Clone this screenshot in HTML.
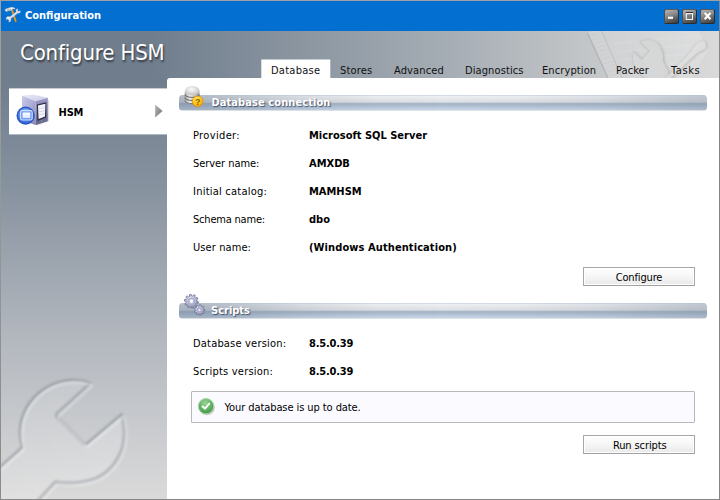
<!DOCTYPE html>
<html>
<head>
<meta charset="utf-8">
<title>Configuration</title>
<style>
html,body{margin:0;padding:0;}
body{width:720px;height:500px;overflow:hidden;background:#868686;position:relative;
  font-family:"DejaVu Sans Condensed","Liberation Sans",sans-serif;font-size:11px;color:#000;}
.abs{position:absolute;}
svg{position:absolute;overflow:visible;}
#titlebar{left:1px;top:1px;width:718px;height:30px;background:#0370d1;}
#title{left:25px;top:9px;color:#fff;font-weight:bold;font-size:11px;line-height:14px;white-space:nowrap;}
.wb{top:9px;width:15px;height:15px;border-radius:2.5px;box-sizing:border-box;border:1px solid #2c2c2c;border-top-color:#5a5a5a;border-left-color:#4e4e4e;
  background:linear-gradient(160deg,#b6b6b6 0%,#8a8a8a 40%,#5c5c5c 70%,#3a3a3a 100%);}
#main{left:1px;top:31px;width:718px;height:468px;background:linear-gradient(to bottom,#6f7d8d 0px,#6f7d8d 50px,#8893a0 160px,#b2b7be 305px,#dadada 468px);overflow:hidden;}
#hdr{left:0;top:0;width:718px;height:47px;background:linear-gradient(to right,#6f7d8d 0px,#6f7d8d 150px,#929ca6 340px,#a8afb6 460px,#c2c5c7 580px,#dadada 718px);}
#heading{left:20px;top:38px;font-size:22px;line-height:30px;letter-spacing:-0.17px;color:#fff;white-space:nowrap;text-shadow:1px 2px 2px rgba(0,0,0,0.55);}
#content{left:167px;top:78px;width:552px;height:421px;background:#fff;border-top-left-radius:3px;}
#tab{left:261px;top:59px;width:69.4px;height:20px;background:#fff;transform:translate(0.3px,0.5px);}
.tabtxt{top:64px;line-height:14px;white-space:nowrap;color:#111;}
#side{left:9px;top:89px;width:159px;height:46px;background:#fff;transform:translateY(-0.6px);}
.bar{left:179px;width:528px;height:16px;border-radius:4px;overflow:hidden;transform-origin:0 0;transform:scaleY(0.969);
  background:linear-gradient(to bottom,#c5ced8 0%,#eef0f3 8%,#dcdfe3 46%,#a3b3c4 56%,#c5d5e6 94%,#bfc8d2 100%);}
.bar i{position:absolute;left:0;top:0;width:100%;height:100%;
  background:linear-gradient(to bottom,#b4bdc8 0%,#b0b9c4 8%,#a7b1bd 46%,#8b9cb0 56%,#a2b1c2 94%,#a6b2c0 100%);
  -webkit-mask-image:linear-gradient(to right,#000 0%,rgba(0,0,0,0.9) 7%,rgba(0,0,0,0.35) 23%,rgba(0,0,0,0.06) 38%,rgba(0,0,0,0) 50%,rgba(0,0,0,0.06) 64%,rgba(0,0,0,0.28) 80%,rgba(0,0,0,0.62) 94%,rgba(0,0,0,0.75) 100%);
  mask-image:linear-gradient(to right,#000 0%,rgba(0,0,0,0.9) 7%,rgba(0,0,0,0.35) 23%,rgba(0,0,0,0.06) 38%,rgba(0,0,0,0) 50%,rgba(0,0,0,0.06) 64%,rgba(0,0,0,0.28) 80%,rgba(0,0,0,0.62) 94%,rgba(0,0,0,0.75) 100%);}
.bartxt{color:#fff;font-weight:bold;line-height:14px;white-space:nowrap;text-shadow:1px 1px 1px rgba(60,75,100,0.9);}
.lbl{left:193px;line-height:14px;white-space:nowrap;}
.val{left:309px;line-height:14px;font-weight:bold;white-space:nowrap;}
.btn{left:583px;width:110px;height:17px;border:1px solid #a8a8a8;border-bottom-color:#a0a0a0;box-shadow:inset 0 0 0 1px #fff;background:linear-gradient(to bottom,#ffffff 0%,#f6f6f6 50%,#e9e9e9 100%);text-align:center;line-height:20px;overflow:hidden;white-space:nowrap;}
#status{left:191px;top:391px;width:502px;height:30px;border:1px solid #b8b8b8;border-radius:1px;background:#fafaff;}
</style>
</head>
<body>
<div class="abs" style="left:0;top:0;width:720px;height:1px;background:#a0a0a0"></div>
<div class="abs" style="left:0;top:0;width:1px;height:500px;background:linear-gradient(to bottom,#a0a0a0,#8a8a8a)"></div>
<div class="abs" id="titlebar"></div>
<div class="abs" id="title">Configuration</div>
<div class="abs wb" style="left:664px"></div>
<div class="abs wb" style="left:682px"></div>
<div class="abs wb" style="left:700px"></div>
<svg style="left:664px;top:9px" width="51" height="15" viewBox="0 0 51 15">
  <rect x="4" y="7.7" width="5" height="2.1" fill="#fff"/>
  <rect x="21.8" y="3" width="7.2" height="1.3" fill="#303030"/>
  <rect x="22.3" y="4.6" width="6.2" height="5.8" fill="none" stroke="#fff" stroke-width="1"/>
  <path d="M40.7 3.9 L46.5 10.3 M46.5 3.9 L40.7 10.3" stroke="#fff" stroke-width="2.1" fill="none"/>
</svg>

<div class="abs" id="main"><div class="abs" id="hdr"></div><svg style="left:-1px;top:-31px" width="720" height="500" viewBox="0 0 720 500">
  <defs>
    <linearGradient id="gWr" x1="0" y1="0" x2="1" y2="1">
      <stop offset="0" stop-color="#fff" stop-opacity="0.08"/><stop offset="1" stop-color="#fff" stop-opacity="0.24"/>
    </linearGradient>
    <clipPath id="cLeft"><rect x="1" y="135" width="166" height="364"/></clipPath>
    <clipPath id="cTop"><rect x="1" y="31" width="718" height="47"/></clipPath>
    <filter id="fB1" x="-20%" y="-20%" width="140%" height="140%"><feGaussianBlur stdDeviation="1.1"/></filter>
    <filter id="fB2" x="-20%" y="-20%" width="140%" height="140%"><feGaussianBlur stdDeviation="0.7"/></filter>
  </defs>
  <g clip-path="url(#cLeft)">
    <path d="M90 383 L57 413 Q55 415 57 417 L83 443 Q85 445 87 443 L121.5 414 Q126 430 122.5 446 Q116 468 96 478 Q76 485 55 481.5 L36 502 L-4 502 L-4 470 L22 447 Q16 425 27 406 Q40 386 62 381 Q78 378 90 383 Z" transform="translate(1,1.2)" fill="url(#gWr)"/>
    <path d="M90 383 L57 413 Q55 415 57 417 L83 443 Q85 445 87 443 L121.5 414 Q126 430 122.5 446 Q116 468 96 478 Q76 485 55 481.5 L36 502 L-4 502 L-4 470 L22 447 Q16 425 27 406 Q40 386 62 381 Q78 378 90 383 Z" transform="translate(0.2,0.4)" fill="none" stroke="#5f6771" stroke-opacity="0.34" stroke-width="3" stroke-linejoin="round" filter="url(#fB1)"/>
    <path d="M90 383 L57 413 Q55 415 57 417 L83 443 Q85 445 87 443 L121.5 414 Q126 430 122.5 446 Q116 468 96 478 Q76 485 55 481.5 L36 502 L-4 502 L-4 470 L22 447 Q16 425 27 406 Q40 386 62 381 Q78 378 90 383 Z" transform="translate(2.2,2.4)" fill="none" stroke="#fff" stroke-opacity="0.34" stroke-width="2.8" stroke-linejoin="round" filter="url(#fB1)"/>
  </g>
  <g clip-path="url(#cTop)">
    <path d="M601 30 L698 30 L708 50 L690 80 L623 80 Z" fill="#fff" opacity="0.17"/>
    <path d="M612 44 L700 36 M616 52 L704 44 M620 60 L700 53 M623 68 L694 62" fill="none" stroke="#fff" stroke-opacity="0.12" stroke-width="1.2"/>
    <path d="M587.5 33 L596 29 L601 30 L623 80 L609 80 Z" fill="#fff" opacity="0.2"/>
    <path d="M590 36 L599 33 M592 40 L601 37 M594 44 L603 41 M596 48 L605 45 M598 52 L607 49 M600 56 L609 53 M602 60 L611 57 M604 64 L613 61 M606 68 L615 65 M608 72 L617 69 M610 76 L619 73" fill="none" stroke="#999" stroke-opacity="0.13" stroke-width="0.8"/>
    <path d="M587.5 33 L609 80" fill="none" stroke="#777" stroke-opacity="0.28" stroke-width="1.4" filter="url(#fB2)"/>
    <path d="M601 30 L623 80" fill="none" stroke="#888" stroke-opacity="0.22" stroke-width="1.2" filter="url(#fB2)"/>
    <path d="M641 42 Q649 38 657 43 Q664 50 663 61 L672 80 L648 80 Q638 74 633.5 62 Q632 57 634 52 L642 60 L650 51 Z" transform="translate(1.5,1)" fill="#666" fill-opacity="0.16" filter="url(#fB1)"/>
    <path d="M641 42 Q649 38 657 43 Q664 50 663 61 L672 80 L648 80 Q638 74 633.5 62 Q632 57 634 52 L642 60 L650 51 Z" fill="none" stroke="#777" stroke-opacity="0.2" stroke-width="2" filter="url(#fB1)"/>
    <path d="M641 42 Q649 38 657 43 Q664 50 663 61 L672 80 L648 80 Q638 74 633.5 62 Q632 57 634 52 L642 60 L650 51 Z" fill="#e2e2e2" fill-opacity="0.6"/>
    <path d="M697 44 Q702 40 705 42 Q707 45 705 49 L697 53 L669 80 L664 80 L691 52 Q693 47 697 44 Z" transform="translate(1.2,1)" fill="#666" fill-opacity="0.14" filter="url(#fB1)"/>
    <path d="M697 44 Q702 40 705 42 Q707 45 705 49 L697 53 L669 80 L664 80 L691 52 Q693 47 697 44 Z" fill="none" stroke="#777" stroke-opacity="0.2" stroke-width="1.6" filter="url(#fB1)"/>
    <path d="M697 44 Q702 40 705 42 Q707 45 705 49 L697 53 L669 80 L664 80 L691 52 Q693 47 697 44 Z" fill="#e6e6e6" fill-opacity="0.65"/>
  </g>
</svg></div>
<div class="abs" id="heading">Configure HSM</div>
<div class="abs" id="content"></div>
<div class="abs" id="tab"></div>
<div class="abs tabtxt" style="left:271px;letter-spacing:0.25px">Database</div>
<div class="abs tabtxt" style="left:340px;letter-spacing:0.17px">Stores</div>
<div class="abs tabtxt" style="left:394px;letter-spacing:0.12px">Advanced</div>
<div class="abs tabtxt" style="left:465px;letter-spacing:0.1px">Diagnostics</div>
<div class="abs tabtxt" style="left:542px;letter-spacing:0.11px">Encryption</div>
<div class="abs tabtxt" style="left:616px;letter-spacing:0.05px">Packer</div>
<div class="abs tabtxt" style="left:671px;letter-spacing:0.6px">Tasks</div>
<div class="abs" id="side"></div>
<div class="abs" style="left:58.6px;top:106px;font-weight:bold;line-height:14px;letter-spacing:-0.2px">HSM</div>

<div class="abs bar" style="top:95px"><i></i></div>
<div class="abs bartxt" style="left:211.5px;top:96px;letter-spacing:0.08px">Database connection</div>
<div class="abs lbl" style="top:129px;letter-spacing:0.35px">Provider:</div>
<div class="abs val" style="top:129px">Microsoft SQL Server</div>
<div class="abs lbl" style="top:157px;letter-spacing:-0.06px">Server name:</div>
<div class="abs val" style="top:157px">AMXDB</div>
<div class="abs lbl" style="top:185px;letter-spacing:0.23px">Initial catalog:</div>
<div class="abs val" style="top:185px">MAMHSM</div>
<div class="abs lbl" style="top:213px;letter-spacing:-0.2px">Schema name:</div>
<div class="abs val" style="top:213px">dbo</div>
<div class="abs lbl" style="top:241px;letter-spacing:0.09px">User name:</div>
<div class="abs val" style="top:241px;letter-spacing:0.09px">(Windows Authentication)</div>
<div class="abs btn" style="top:267px;letter-spacing:-0.15px">Configure</div>

<div class="abs bar" style="top:303px"><i></i></div>
<div class="abs bartxt" style="left:211px;top:304px">Scripts</div>
<div class="abs lbl" style="top:337px;letter-spacing:0.19px">Database version:</div>
<div class="abs val" style="top:337px;letter-spacing:-0.19px">8.5.0.39</div>
<div class="abs lbl" style="top:365px;letter-spacing:0.22px">Scripts version:</div>
<div class="abs val" style="top:365px;letter-spacing:-0.19px">8.5.0.39</div>
<div class="abs" id="status"></div>
<div class="abs" style="left:224.5px;top:401px;line-height:14px;white-space:nowrap;letter-spacing:-0.08px">Your database is up to date.</div>
<div class="abs btn" style="top:435px;letter-spacing:-0.1px;text-indent:1.5px">Run scripts</div>

<!-- title icon: hammer and wrench -->
<svg style="left:5px;top:7px" width="16" height="16" viewBox="0 0 16 16">
  <path d="M7.2 3.6 L10.7 14.2" stroke="#d18a1c" stroke-width="1.9" stroke-linecap="round" fill="none"/>
  <path d="M7.6 4.6 L10.4 13.4" stroke="#f0b040" stroke-width="0.6" stroke-linecap="round" fill="none"/>
  <path d="M0.2 3.8 L0.3 2.3 Q3 1.2 5.4 0.5 Q8.4 -0.2 10.2 1.7 L9.3 2.1 Q8 1.3 7 2.2 L6.6 3.6 L4.8 3.2 L1.6 4.4 Z" fill="#f4f4f4" stroke="#c9c2b4" stroke-width="0.5"/>
  <path d="M2.3 2.3 L2.5 3.7 M3.6 1.9 L3.9 3.3 M5.2 1.6 L5.6 2.7" stroke="#6b5a48" stroke-width="0.7" fill="none" opacity="0.75"/>
  <path d="M4 11.8 L12.6 5.2" stroke="#e4e9f2" stroke-width="2.1" stroke-linecap="round" fill="none"/>
  <path d="M4.6 11.9 L12.8 5.7" stroke="#7a86a6" stroke-width="0.5" fill="none" opacity="0.7"/>
  <path d="M11.2 2.2 Q10.4 4.4 12 5.6 Q13.6 6.8 15.4 5.4 L15.2 3.6 L13.6 4.6 L12.6 3.6 L13 1.8 Z" fill="#eef1f6" stroke="#98a2bc" stroke-width="0.4"/>
  <path d="M1.2 12.4 Q0.6 10.4 2.6 9.6 Q4.6 9 5.6 10.8 Q6.6 12.8 5.2 14.8 L3.6 15 L4.2 12.8 L3.2 11.8 L1.6 12.8 Z" fill="#eef1f6" stroke="#98a2bc" stroke-width="0.4"/>
</svg>

<!-- HSM icon: server tower with blue badge -->
<svg style="left:17px;top:94px" width="32" height="32" viewBox="0 0 32 32">
  <defs>
    <linearGradient id="gLeft" x1="0" y1="0" x2="1" y2="1">
      <stop offset="0" stop-color="#c9c9ea"/><stop offset="0.55" stop-color="#a9a9d4"/><stop offset="1" stop-color="#8686b8"/>
    </linearGradient>
    <linearGradient id="gFront" x1="0" y1="0" x2="0" y2="1">
      <stop offset="0" stop-color="#9c9cc6"/><stop offset="1" stop-color="#62628e"/>
    </linearGradient>
    <linearGradient id="gTop" x1="0" y1="0" x2="1" y2="1">
      <stop offset="0" stop-color="#ececfa"/><stop offset="1" stop-color="#c8c8e6"/>
    </linearGradient>
    <radialGradient id="gBadge" cx="0.5" cy="0.3" r="0.8">
      <stop offset="0" stop-color="#8fb6f6"/><stop offset="0.6" stop-color="#4a7fe6"/><stop offset="1" stop-color="#2454c4"/>
    </radialGradient>
    <linearGradient id="gScreen" x1="0" y1="0" x2="0" y2="1">
      <stop offset="0" stop-color="#ffffff"/><stop offset="1" stop-color="#d9e6fb"/>
    </linearGradient>
  </defs>
  <path d="M30.6 5 L32.2 6.5 L32.2 27 L20 31.8 L19 30.8 Z" fill="#000" opacity="0.13"/>
  <path d="M5 1.8 L16 0.5 L30.8 3.8 L18.6 7.2 Z" fill="url(#gTop)"/>
  <path d="M5 1.8 L18.6 7.2 L18.6 31 L5 26.5 Z" fill="url(#gLeft)"/>
  <path d="M18.6 7.2 L30.8 3.8 L30.8 27.2 L18.6 31 Z" fill="url(#gFront)"/>
  <path d="M19.9 10.4 L29.4 8.2 L29.2 23.6 L20.4 27 Z" fill="#2e2e44"/>
  <path d="M21 11.6 L28.4 9.8 L28 22.4 L21.6 25 Z" fill="#f4f5fb"/>
  <path d="M21.4 15 L28.2 13.4 M21.5 18 L28.1 16.6 M21.6 21 L28 19.6" stroke="#c7c9dc" stroke-width="0.7" fill="none"/>
  <circle cx="24.6" cy="27" r="0.7" fill="#4fd06a"/>
  <circle cx="8.6" cy="21.6" r="8.4" fill="url(#gBadge)" stroke="#2a52c4" stroke-width="1.4"/>
  <rect x="3.6" y="16.6" width="11.6" height="9.4" rx="1.6" fill="#6f9cf0" stroke="#cfe0fc" stroke-width="1.1"/>
  <rect x="5.6" y="18.5" width="7.6" height="5.4" rx="0.5" fill="url(#gScreen)"/>
</svg>

<!-- arrow -->
<svg style="left:154px;top:103px" width="10" height="16" viewBox="0 0 10 16">
  <defs><linearGradient id="gArr" x1="0" y1="0" x2="1" y2="1"><stop offset="0" stop-color="#b8b8b8"/><stop offset="1" stop-color="#6e6e6e"/></linearGradient></defs>
  <path d="M1.2 1.6 L8.6 8 L1.2 14.6 Z" fill="url(#gArr)"/>
</svg>

<!-- database icon -->
<svg style="left:183px;top:85px" width="22" height="23" viewBox="0 0 22 23">
  <defs>
    <linearGradient id="gDb" x1="0" y1="0" x2="1" y2="0">
      <stop offset="0" stop-color="#9c9c9c"/><stop offset="0.35" stop-color="#ececec"/><stop offset="0.7" stop-color="#c4c4c4"/><stop offset="1" stop-color="#8a8a8a"/>
    </linearGradient>
    <radialGradient id="gDbTop" cx="0.45" cy="0.35" r="0.7">
      <stop offset="0" stop-color="#fbfbfb"/><stop offset="1" stop-color="#bdbdbd"/>
    </radialGradient>
    <radialGradient id="gQ" cx="0.4" cy="0.3" r="0.8">
      <stop offset="0" stop-color="#ffe566"/><stop offset="0.6" stop-color="#ffc20a"/><stop offset="1" stop-color="#f09000"/>
    </radialGradient>
  </defs>
  <path d="M1.9 6 L1.4 16 A7.5 3 0 0 0 16.4 16 L16.4 6 Z" fill="url(#gDb)"/>
  <path d="M2 9.6 A7.2 2.8 0 0 0 16.4 9.6 M2 12.7 A7.2 2.8 0 0 0 16.4 12.7" stroke="#4c4c4c" stroke-width="1" fill="none" opacity="0.85"/>
  <path d="M2 15.8 A7.2 2.8 0 0 0 16.4 15.8" stroke="#555" stroke-width="0.9" fill="none" opacity="0.8"/>
  <ellipse cx="9.2" cy="5.7" rx="7.3" ry="4.6" fill="url(#gDbTop)"/>
  <circle cx="14.6" cy="16.3" r="5.3" fill="url(#gQ)" stroke="#e88a00" stroke-width="0.7"/>
  <text x="14.7" y="19.6" text-anchor="middle" font-family="'Liberation Sans',sans-serif" font-weight="bold" font-size="9" fill="#8a5a00">?</text>
</svg>

<!-- gears icon -->
<svg style="left:182.5px;top:292.5px" width="24" height="24" viewBox="0 0 24 24">
  <defs>
    <radialGradient id="gGear" cx="0.4" cy="0.35" r="0.8">
      <stop offset="0" stop-color="#e6e7f2"/><stop offset="0.5" stop-color="#b4b6d2"/><stop offset="1" stop-color="#7f82a8"/>
    </radialGradient>
  </defs>
  <g transform="translate(8.4,8.3) rotate(9)">
    <path d="M5.19,-1.07 L6.94,-0.88 L6.94,0.88 L5.19,1.07 L4.83,2.18 L6.13,3.37 L5.10,4.79 L3.57,3.92 L2.63,4.60 L2.98,6.33 L1.31,6.88 L0.58,5.27 L-0.58,5.27 L-1.31,6.88 L-2.98,6.33 L-2.63,4.60 L-3.57,3.92 L-5.10,4.79 L-6.13,3.37 L-4.83,2.18 L-5.19,1.07 L-6.94,0.88 L-6.94,-0.88 L-5.19,-1.07 L-4.83,-2.18 L-6.13,-3.37 L-5.10,-4.79 L-3.57,-3.92 L-2.63,-4.60 L-2.98,-6.33 L-1.31,-6.88 L-0.58,-5.27 L0.58,-5.27 L1.31,-6.88 L2.98,-6.33 L2.63,-4.60 L3.57,-3.92 L5.10,-4.79 L6.13,-3.37 L4.83,-2.18Z" fill="url(#gGear)" stroke="#6c6f94" stroke-width="0.7"/>
    <circle r="3.3" fill="#b9bbd8" stroke="#9a9cc0" stroke-width="0.5"/>
    <circle r="1.7" fill="#fff"/>
  </g>
  <g transform="translate(16.5,17)">
    <path d="M3.90,-0.90 L5.25,-0.74 L5.25,0.74 L3.90,0.90 L3.56,1.82 L4.49,2.81 L3.55,3.94 L2.41,3.19 L1.56,3.68 L1.64,5.04 L0.18,5.30 L-0.21,3.99 L-1.17,3.83 L-1.99,4.91 L-3.26,4.18 L-2.73,2.93 L-3.35,2.18 L-4.68,2.49 L-5.18,1.10 L-3.97,0.49 L-3.97,-0.49 L-5.18,-1.10 L-4.68,-2.49 L-3.35,-2.18 L-2.73,-2.93 L-3.26,-4.18 L-1.99,-4.91 L-1.17,-3.83 L-0.21,-3.99 L0.18,-5.30 L1.64,-5.04 L1.56,-3.68 L2.41,-3.19 L3.55,-3.94 L4.49,-2.81 L3.56,-1.82Z" fill="url(#gGear)" stroke="#6c6f94" stroke-width="0.7"/>
    <circle r="2.4" fill="#b4b6d4" stroke="#9496bc" stroke-width="0.5"/>
    <circle r="1.1" fill="#eeeef8"/>
  </g>
</svg>

<!-- green check -->
<svg style="left:197px;top:397px" width="20" height="20" viewBox="0 0 20 20">
  <defs>
    <radialGradient id="gChk" cx="0.45" cy="0.3" r="0.8">
      <stop offset="0" stop-color="#9bd49b"/><stop offset="0.55" stop-color="#5fae5f"/><stop offset="1" stop-color="#3f8f3f"/>
    </radialGradient>
  </defs>
  <circle cx="10" cy="10.4" r="7.9" fill="#000" opacity="0.18"/>
  <circle cx="9" cy="9.2" r="7.7" fill="url(#gChk)" stroke="#a6d8a6" stroke-width="1"/>
  <path d="M5.6 9.5 L8 11.7 L12.2 6.7" stroke="#fff" stroke-width="1.9" fill="none" stroke-linecap="round" stroke-linejoin="round"/>
</svg>
</body>
</html>
